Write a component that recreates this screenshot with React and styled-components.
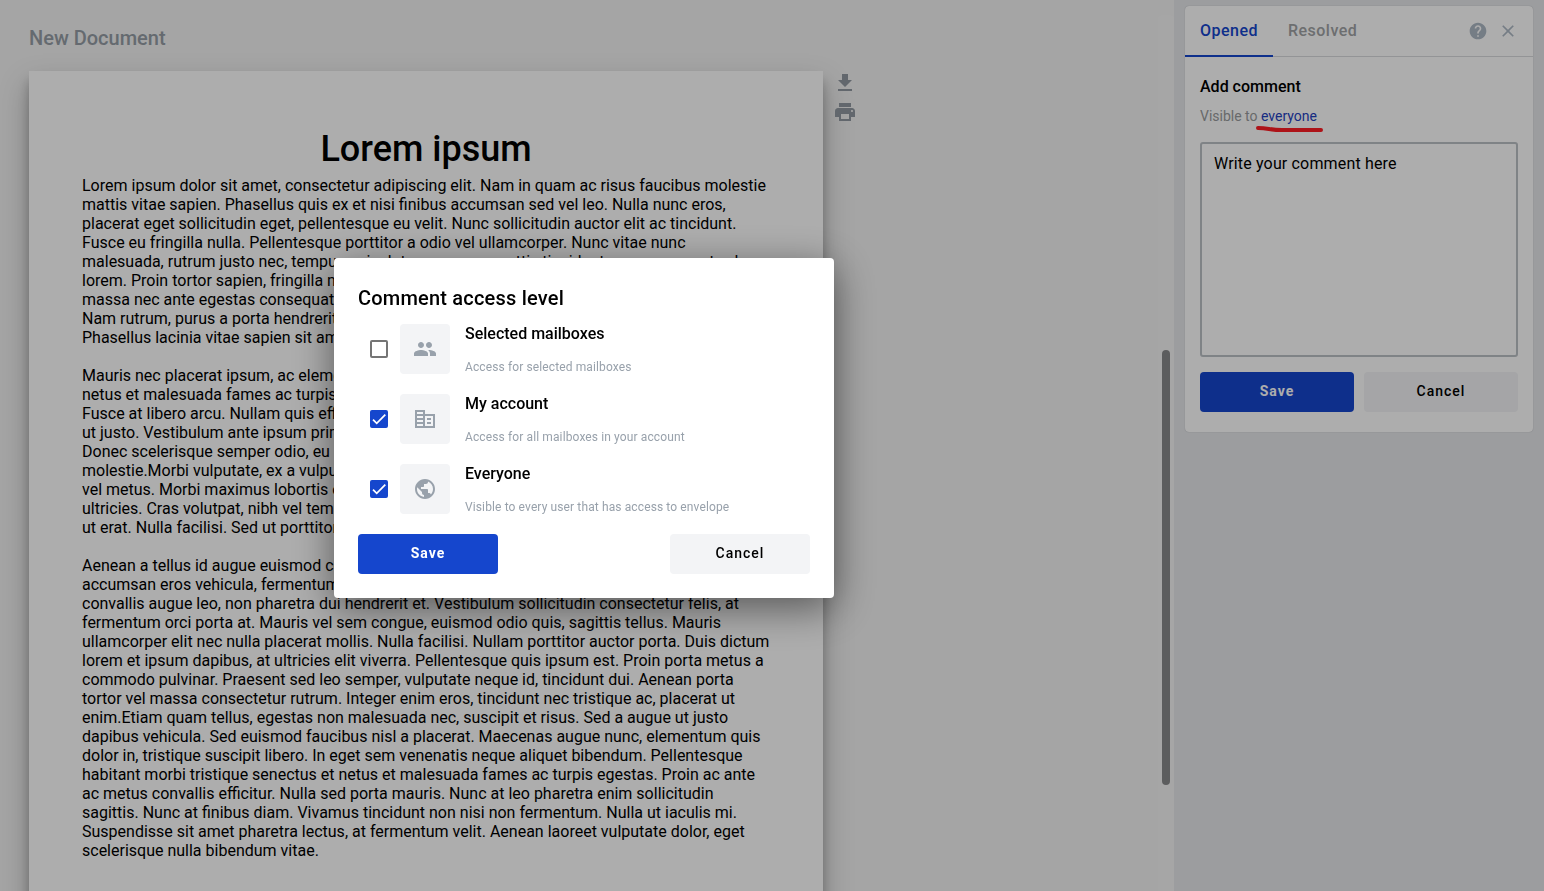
import React, { useState } from "react";
import styled, { createGlobalStyle, css } from "styled-components";

const GlobalStyle = createGlobalStyle`
  *, *::before, *::after { box-sizing: border-box; }
  body {
    margin: 0;
    font-family: Roboto, "Liberation Sans", sans-serif;
    color: #000;
    background: #f3f3f3;
  }
  button, textarea { font-family: inherit; }
`;

const Layout = styled.div`
  display: flex;
  height: 100vh;
  overflow: hidden;
`;

const Viewer = styled.main`
  flex: 1;
  min-width: 0;
  padding: 28px 0 0 29px;
  overflow: hidden;
`;

const DocumentName = styled.h1`
  margin: 0 0 23px;
  font-size: 20px;
  line-height: 20px;
  font-weight: 500;
  color: #959da5;
`;

const DocumentRow = styled.div`
  display: flex;
  align-items: flex-start;
  gap: 10px;
`;

const Sheet = styled.article`
  flex: none;
  width: 794px;
  min-height: 1123px;
  padding: 57px 53px;
  background: #fff;
  box-shadow: 0 14px 28px rgba(0, 0, 0, 0.25), 0 10px 10px rgba(0, 0, 0, 0.22);
`;

const SheetTitle = styled.h2`
  margin: 0 0 6px;
  font-size: 36px;
  line-height: 42px;
  font-weight: 500;
  text-align: center;
`;

const Paragraph = styled.p`
  margin: 0 0 19px;
  font-size: 16px;
  line-height: 19px;
  white-space: pre;
`;

const Tools = styled.div`
  display: flex;
  flex-direction: column;
  gap: 5px;
`;

const IconButton = styled.button`
  display: flex;
  padding: 0;
  border: 0;
  background: none;
  color: ${(p) => p.$color || "#9199a1"};
`;

const ScrollTrack = styled.div`
  flex: none;
  display: flex;
  justify-content: center;
  width: 16px;
  margin-top: 15px;
  padding-top: 335px;
  border-radius: 4px 4px 0 0;
  background: #f5f5f5;
`;

const ScrollThumb = styled.div`
  width: 8px;
  height: 435px;
  border-radius: 4px;
  background: #88898b;
`;

const Sidebar = styled.aside`
  flex: none;
  width: 370px;
  padding: 6px 11px;
  background: #e6e8eb;
`;

const Panel = styled.section`
  background: #fff;
  border-radius: 4px;
  box-shadow: 0 0 1px rgba(0, 0, 0, 0.3);
`;

const Tabs = styled.div`
  display: flex;
  align-items: center;
  height: 51px;
  padding-right: 15px;
  border-bottom: 1px solid #d9dbde;
`;

const Tab = styled.button`
  align-self: stretch;
  height: 51px;
  padding: 0 15px;
  border: 0;
  border-bottom: 2px solid ${(p) => (p.$active ? "#1546cd" : "transparent")};
  background: none;
  font-size: 16px;
  font-weight: 500;
  letter-spacing: 0.03em;
  color: ${(p) => (p.$active ? "#1546cd" : "#a1a3a5")};
`;

const PanelActions = styled.div`
  display: flex;
  align-items: center;
  gap: 10px;
  margin-left: auto;
`;

const CommentForm = styled.form`
  padding: 20px 15px;
`;

const FormTitle = styled.h3`
  margin: 0 0 9px;
  font-size: 16px;
  line-height: 20px;
  font-weight: 500;
`;

const Visibility = styled.div`
  margin-bottom: 16px;
  font-size: 14px;
  line-height: 20px;
  color: #999b9d;
`;

const VisibilityLink = styled.a`
  position: relative;
  color: #1f41c0;
  text-decoration: none;
`;

const Marker = styled.svg`
  position: absolute;
  left: 50%;
  top: 100%;
  transform: translateX(-50%);
`;

const CommentBox = styled.textarea`
  display: block;
  width: 100%;
  height: 215px;
  padding: 10px 12px;
  border: 2px solid #bcc1c6;
  border-radius: 3px;
  outline: 0;
  resize: none;
  background: #fff;
  font-size: 16px;
  line-height: 20px;
  letter-spacing: 0.01em;
  &::placeholder { color: #000; opacity: 1; }
`;

const ButtonRow = styled.div`
  display: flex;
  justify-content: space-between;
  gap: 10px;
  margin-top: ${(p) => p.$top}px;
`;

const Button = styled.button`
  height: 40px;
  padding: 0 0 2px;
  border: 0;
  border-radius: 4px;
  font-size: 14px;
  letter-spacing: 1px;
  ${(p) => (p.$width ? css`width: ${p.$width}px;` : css`flex: 1;`)}
  ${(p) =>
    p.$primary
      ? css`background: #1546cd; color: #fff; font-weight: 700;`
      : css`background: #f3f4f6; color: #000; font-weight: 500;`}
`;

const Backdrop = styled.div`
  position: fixed;
  inset: 0;
  z-index: 2;
  background: rgba(0, 0, 0, 0.32);
`;

const DialogLayer = styled.div`
  position: fixed;
  inset: 0 376px 35px 0;
  z-index: 4;
  display: grid;
  place-items: center;
`;

const Dialog = styled.section`
  width: 500px;
  padding: 24px;
  border-radius: 4px;
  background: #fff;
  box-shadow: 0 10px 40px rgba(0, 0, 0, 0.5);
`;

const DialogTitle = styled.h2`
  margin: 0 0 10px;
  font-size: 20px;
  line-height: 32px;
  font-weight: 500;
  letter-spacing: 0.01em;
`;

const Options = styled.div`
  display: flex;
  flex-direction: column;
  gap: 20px;
`;

const Option = styled.label`
  display: flex;
  align-items: center;
  height: 50px;
  padding-left: 12px;
`;

const CheckboxFrame = styled.span`
  display: grid;
  place-items: center;
  margin-right: 12px;
  > * { grid-area: 1 / 1; }
`;

const Checkbox = styled.input`
  appearance: none;
  width: 18px;
  height: 18px;
  margin: 0;
  border: 2px solid #757575;
  border-radius: 2px;
  &:checked {
    border-color: #1546cd;
    background: #1546cd;
  }
`;

const CheckMark = styled.svg`
  pointer-events: none;
  z-index: 1;
`;

const OptionIcon = styled.span`
  display: grid;
  place-items: center;
  width: 50px;
  height: 50px;
  margin-right: 15px;
  border-radius: 4px;
  background: #f3f4f6;
  color: #98a1ab;
`;

const OptionText = styled.span`
  display: flex;
  flex-direction: column;
  align-self: stretch;
  justify-content: space-between;
`;

const OptionName = styled.span`
  font-size: 16px;
  line-height: 20px;
  font-weight: 500;
`;

const OptionHint = styled.span`
  font-size: 12px;
  line-height: 14px;
  letter-spacing: 0.01em;
  color: #98a1ab;
`;

const paths = {
  download: "M19 9h-4V3H9v6H5l7 7 7-7zM5 18v2h14v-2H5z",
  print:
    "M19 8H5c-1.66 0-3 1.34-3 3v6h4v4h12v-4h4v-6c0-1.66-1.34-3-3-3zm-3 11H8v-5h8v5zm3-7c-.55 0-1-.45-1-1s.45-1 1-1 1 .45 1 1-.45 1-1 1zm-1-9H6v4h12V3z",
  help:
    "M12 2C6.48 2 2 6.48 2 12s4.48 10 10 10 10-4.48 10-10S17.52 2 12 2zm1 17h-2v-2h2v2zm2.07-7.75l-.9.92C13.45 12.9 13 13.5 13 15h-2v-.5c0-1.1.45-2.1 1.17-2.83l1.24-1.26c.37-.36.59-.86.59-1.41 0-1.1-.9-2-2-2s-2 .9-2 2H8c0-2.21 1.79-4 4-4s4 1.79 4 4c0 .88-.36 1.68-.93 2.25z",
  close:
    "M19 6.41L17.59 5 12 10.59 6.41 5 5 6.41 10.59 12 5 17.59 6.41 19 12 13.41 17.59 19 19 17.59 13.41 12z",
  group:
    "M16 11c1.66 0 2.99-1.34 2.99-3S17.66 5 16 5c-1.66 0-3 1.34-3 3s1.34 3 3 3zm-8 0c1.66 0 2.99-1.34 2.99-3S9.66 5 8 5C6.34 5 5 6.34 5 8s1.34 3 3 3zm0 2c-2.33 0-7 1.17-7 3.5V19h14v-2.5c0-2.33-4.67-3.5-7-3.5zm8 0c-.29 0-.62.02-.97.05 1.16.84 1.97 1.97 1.97 3.45V19h6v-2.5c0-2.33-4.67-3.5-7-3.5z",
  business:
    "M12 7V3H2v18h20V7H12zM10 19H4v-2h6v2zm0-4H4v-2h6v2zm0-4H4V9h6v2zm0-4H4V5h6v2zm10 12h-8V9h8v10zm-2-8h-4v2h4v-2zm0 4h-4v2h4v-2z",
  globe:
    "M12 2C6.48 2 2 6.48 2 12s4.48 10 10 10 10-4.48 10-10S17.52 2 12 2zm-1 17.93c-3.95-.49-7-3.85-7-7.93 0-.62.08-1.21.21-1.79L9 15v1c0 1.1.9 2 2 2v1.93zm6.9-2.54c-.26-.81-1-1.39-1.9-1.39h-1v-3c0-.55-.45-1-1-1H8v-2h2c.55 0 1-.45 1-1V7h2c1.1 0 2-.9 2-2v-.41c2.93 1.19 5 4.06 5 7.41 0 2.08-.8 3.97-2.1 5.39z",
};

function Icon({ name, size = 24 }) {
  return (
    <svg width={size} height={size} viewBox="0 0 24 24" fill="currentColor" aria-hidden="true">
      <path d={paths[name]} />
    </svg>
  );
}

const paragraphs = [
  `Lorem ipsum dolor sit amet, consectetur adipiscing elit. Nam in quam ac risus faucibus molestie
mattis vitae sapien. Phasellus quis ex et nisi finibus accumsan sed vel leo. Nulla nunc eros,
placerat eget sollicitudin eget, pellentesque eu velit. Nunc sollicitudin auctor elit ac tincidunt.
Fusce eu fringilla nulla. Pellentesque porttitor a odio vel ullamcorper. Nunc vitae nunc
malesuada, rutrum justo nec, tempus euis dutor venenam mattis tincidunt uma congue at vel
lorem. Proin tortor sapien, fringilla nec mauris
massa nec ante egestas consequat
Nam rutrum, purus a porta hendrerit
Phasellus lacinia vitae sapien sit amet`,
  `Mauris nec placerat ipsum, ac elementum
netus et malesuada fames ac turpis
Fusce at libero arcu. Nullam quis efficitur
ut justo. Vestibulum ante ipsum primis
Donec scelerisque semper odio, eu
molestie.Morbi vulputate, ex a vulputate
vel metus. Morbi maximus lobortis eget
ultricies. Cras volutpat, nibh vel tempus
ut erat. Nulla facilisi. Sed ut porttitor`,
  `Aenean a tellus id augue euismod congue
accumsan eros vehicula, fermentum
convallis augue leo, non pharetra dui hendrerit et. Vestibulum sollicitudin consectetur felis, at
fermentum orci porta at. Mauris vel sem congue, euismod odio quis, sagittis tellus. Mauris
ullamcorper elit nec nulla placerat mollis. Nulla facilisi. Nullam porttitor auctor porta. Duis dictum
lorem et ipsum dapibus, at ultricies elit viverra. Pellentesque quis ipsum est. Proin porta metus a
commodo pulvinar. Praesent sed leo semper, vulputate neque id, tincidunt dui. Aenean porta
tortor vel massa consectetur rutrum. Integer enim eros, tincidunt nec tristique ac, placerat ut
enim.Etiam quam tellus, egestas non malesuada nec, suscipit et risus. Sed a augue ut justo
dapibus vehicula. Sed euismod faucibus nisl a placerat. Maecenas augue nunc, elementum quis
dolor in, tristique suscipit libero. In eget sem venenatis neque aliquet bibendum. Pellentesque
habitant morbi tristique senectus et netus et malesuada fames ac turpis egestas. Proin ac ante
ac metus convallis efficitur. Nulla sed porta mauris. Nunc at leo pharetra enim sollicitudin
sagittis. Nunc at finibus diam. Vivamus tincidunt non nisi non fermentum. Nulla ut iaculis mi.
Suspendisse sit amet pharetra lectus, at fermentum velit. Aenean laoreet vulputate dolor, eget
scelerisque nulla bibendum vitae.`,
];

const levels = [
  { id: "selected", icon: "group", name: "Selected mailboxes", hint: "Access for selected mailboxes" },
  { id: "account", icon: "business", name: "My account", hint: "Access for all mailboxes in your account" },
  { id: "everyone", icon: "globe", name: "Everyone", hint: "Visible to every user that has access to envelope" },
];

export default function App() {
  const [checked, setChecked] = useState({ account: true, everyone: true });
  const toggle = (id) => setChecked((c) => ({ ...c, [id]: !c[id] }));

  return (
    <>
      <GlobalStyle />
      <Layout>
        <Viewer>
          <DocumentName>New Document</DocumentName>
          <DocumentRow>
            <Sheet>
              <SheetTitle>Lorem ipsum</SheetTitle>
              {paragraphs.map((text) => (
                <Paragraph key={text}>{text}</Paragraph>
              ))}
            </Sheet>
            <Tools>
              <IconButton aria-label="Download"><Icon name="download" /></IconButton>
              <IconButton aria-label="Print"><Icon name="print" /></IconButton>
            </Tools>
          </DocumentRow>
        </Viewer>
        <ScrollTrack><ScrollThumb /></ScrollTrack>
        <Sidebar>
          <Panel>
            <Tabs>
              <Tab $active>Opened</Tab>
              <Tab>Resolved</Tab>
              <PanelActions>
                <IconButton aria-label="Help" $color="#adb8c5"><Icon name="help" size={20} /></IconButton>
                <IconButton aria-label="Close" $color="#adb8c5"><Icon name="close" size={20} /></IconButton>
              </PanelActions>
            </Tabs>
            <CommentForm onSubmit={(e) => e.preventDefault()}>
              <FormTitle>Add comment</FormTitle>
              <Visibility>
                Visible to{" "}
                <VisibilityLink href="#access">
                  everyone
                  <Marker width="68" height="8" viewBox="0 0 68 8" fill="none" aria-hidden="true">
                    <path d="M3 4C14 4 14 6 27 6H66" stroke="#ff1c24" strokeWidth="4" strokeLinecap="round" />
                  </Marker>
                </VisibilityLink>
              </Visibility>
              <CommentBox aria-label="Comment" placeholder="Write your comment here" />
              <ButtonRow $top={15}>
                <Button $primary>Save</Button>
                <Button type="button">Cancel</Button>
              </ButtonRow>
            </CommentForm>
          </Panel>
        </Sidebar>
      </Layout>
      <Backdrop />
      <DialogLayer>
        <Dialog role="dialog" aria-labelledby="access-title">
          <DialogTitle id="access-title">Comment access level</DialogTitle>
          <Options>
            {levels.map((level) => (
              <Option key={level.id}>
                <CheckboxFrame>
                  <Checkbox type="checkbox" checked={!!checked[level.id]} onChange={() => toggle(level.id)} />
                  {checked[level.id] && (
                    <CheckMark width="14" height="14" viewBox="0 0 24 24" fill="none" aria-hidden="true">
                      <path d="M1.73 12.91L8.1 19.28 22.79 4.59" stroke="#fff" strokeWidth="3" />
                    </CheckMark>
                  )}
                </CheckboxFrame>
                <OptionIcon><Icon name={level.icon} /></OptionIcon>
                <OptionText>
                  <OptionName>{level.name}</OptionName>
                  <OptionHint>{level.hint}</OptionHint>
                </OptionText>
              </Option>
            ))}
          </Options>
          <ButtonRow $top={20}>
            <Button $primary $width={140}>Save</Button>
            <Button $width={140}>Cancel</Button>
          </ButtonRow>
        </Dialog>
      </DialogLayer>
    </>
  );
}
